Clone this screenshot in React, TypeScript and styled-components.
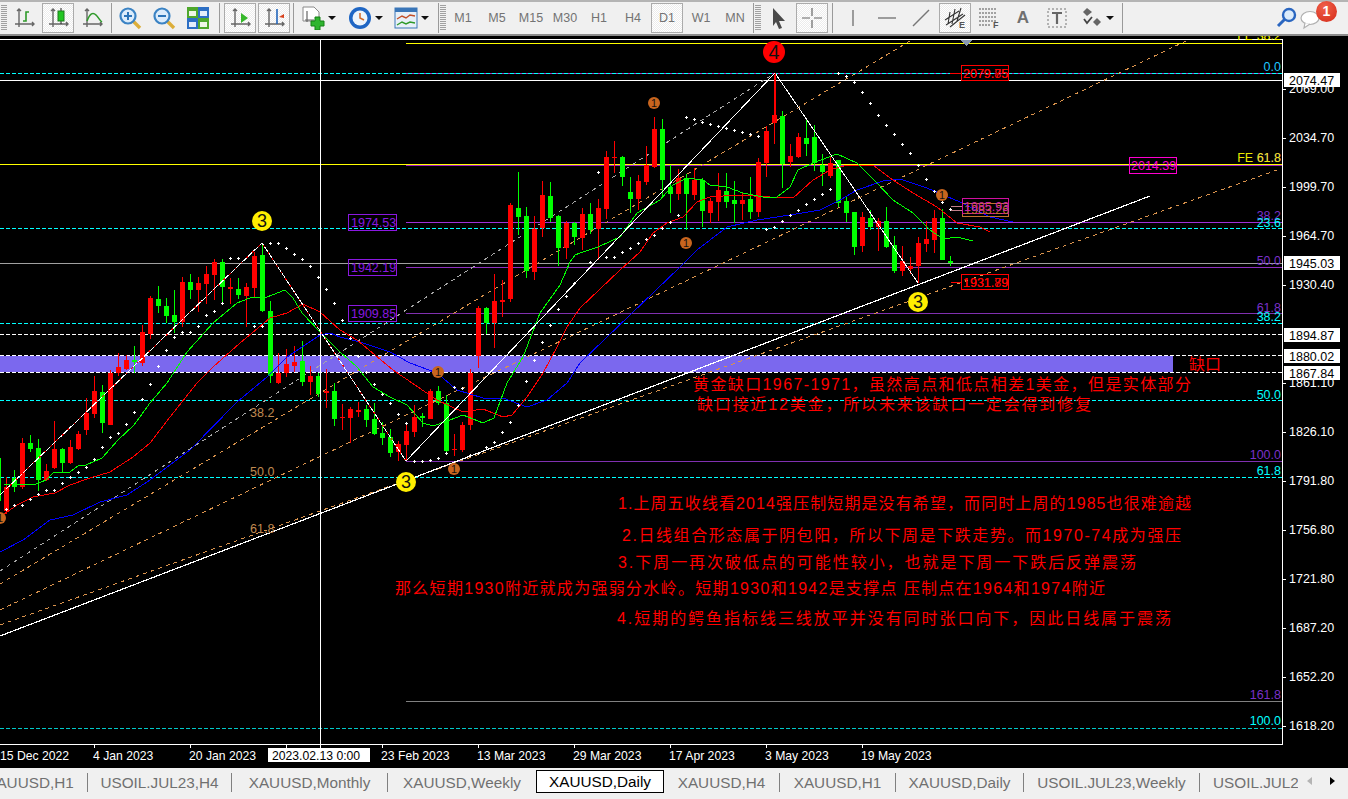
import React from 'react';
import styled, { createGlobalStyle } from 'styled-components';

const Global = createGlobalStyle`
  html, body {
    margin: 0;
    padding: 0;
    background: #f0f0f0;
    overflow: hidden;
  }
`;

const sans = `"Liberation Sans", "Noto Sans CJK SC", sans-serif`;

const Page = styled.div`
  width: 1348px;
  height: 799px;
  display: flex;
  flex-direction: column;
  font-family: ${sans};
`;

const Toolbar = styled.div`
  height: 36px;
  box-sizing: border-box;
  display: flex;
  align-items: center;
  background: #f0f0f0;
  border-top: 2px solid #b4b4b4;
  border-bottom: 2px solid #8c8c8c;
  padding-left: 1px;
`;

const Grip = styled.div`
  width: 6px;
  height: 26px;
  flex: none;
  background: repeating-linear-gradient(to bottom, #a0a0a0 0 1px, #f0f0f0 1px 2px);
`;

const Sep = styled.div<{ $w?: number }>`
  width: ${(p) => p.$w ?? 4}px;
  height: 30px;
  flex: none;
  display: flex;
  justify-content: center;

  &::before {
    content: '';
    width: 1px;
    background: #9a9a9a;
  }
`;

const ToolButton = styled.div<{ $w?: number; $active?: boolean }>`
  flex: none;
  box-sizing: border-box;
  width: ${(p) => (p.$w ?? 34) - (p.$active ? 2 : 0)}px;
  margin: 0 ${(p) => (p.$active ? 1 : 0)}px;
  height: 30px;
  display: flex;
  align-items: center;
  justify-content: center;
  border: 1px solid ${(p) => (p.$active ? '#ababab' : 'transparent')};
  background: ${(p) =>
    p.$active ? 'repeating-conic-gradient(#ffffff 0 25%, #ececec 0 50%) 0 0 / 2px 2px' : 'none'};
  color: #737373;
  font-size: 12.5px;
`;

const DropButton = styled.div<{ $w: number; $pad: number }>`
  flex: none;
  width: ${(p) => p.$w}px;
  height: 30px;
  box-sizing: border-box;
  padding-left: ${(p) => p.$pad}px;
  display: flex;
  align-items: center;
  gap: 3px;
`;

const Caret = styled.span`
  width: 0;
  height: 0;
  border-left: 4px solid transparent;
  border-right: 4px solid transparent;
  border-top: 4px solid #111;
`;

const Spacer = styled.div`
  flex: 1;
`;

const Notify = styled.div`
  width: 40px;
  height: 30px;
  flex: none;
  position: relative;
  margin-right: 9px;
  display: flex;
  align-items: center;
`;

const Badge = styled.span`
  position: absolute;
  right: 2px;
  top: -2px;
  width: 21px;
  height: 21px;
  border-radius: 50%;
  background: radial-gradient(circle at 40% 30%, #f0604a, #d42a18);
  color: #fff;
  font-size: 14px;
  font-weight: bold;
  text-align: center;
  line-height: 21px;
`;

const ChartSvg = styled.svg`
  display: block;
  flex: none;
  background: #000;
  shape-rendering: crispEdges;
`;

const ChartText = styled.text`
  font-family: ${sans};
  font-size: 12.5px;
`;

const MarkerText = styled.text<{ $size: number }>`
  font-family: ${sans};
  font-size: ${(p) => p.$size}px;
  fill: #111;
  text-anchor: middle;
`;

const DateText = styled.text<{ $dark?: boolean }>`
  font-family: ${sans};
  font-size: 12.2px;
  fill: ${(p) => (p.$dark ? '#000' : '#fff')};
`;

const Note = styled.text`
  font-family: ${sans};
  font-size: 16px;
  fill: #ff0000;
`;

const TabBar = styled.div`
  flex: 1;
  display: flex;
  background: #f0f0f0;
  overflow: hidden;
`;

const TabList = styled.div`
  width: 1298px;
  flex: none;
  display: flex;
  align-items: flex-start;
  overflow: hidden;
  padding-top: 2px;
`;

const Tab = styled.div<{ $w: number; $active?: boolean; $sep?: boolean; $cut?: boolean }>`
  flex: none;
  box-sizing: border-box;
  width: ${(p) => p.$w}px;
  height: ${(p) => (p.$active ? 23 : 19)}px;
  margin-top: ${(p) => (p.$active ? 0 : 3)}px;
  padding-left: ${(p) => (p.$cut ? 13 : 0)}px;
  line-height: ${(p) => (p.$active ? 22 : 19)}px;
  text-align: ${(p) => (p.$cut ? 'left' : 'center')};
  font-size: 15.3px;
  white-space: nowrap;
  color: ${(p) => (p.$active ? '#000' : '#707070')};
  background: ${(p) => (p.$active ? '#fff' : 'transparent')};
  border: ${(p) => (p.$active ? '1px solid #000' : 'none')};
  border-right: ${(p) => (p.$sep ? '1px solid #808080' : p.$active ? '1px solid #000' : 'none')};

  &:first-child {
    margin-left: -27px;
  }
`;

const TabArrows = styled.div`
  display: flex;
  gap: 18px;
  padding: 9px 0 0 9px;
`;

const TabArrowLeft = styled.span`
  width: 0;
  height: 0;
  border-top: 4px solid transparent;
  border-bottom: 4px solid transparent;
  border-right: 5px solid #b4b4b4;
`;

const TabArrowRight = styled.span`
  width: 0;
  height: 0;
  border-top: 4px solid transparent;
  border-bottom: 4px solid transparent;
  border-left: 5px solid #000;
`;

const Ico = styled.svg.attrs({ width: 24, height: 24, viewBox: '0 0 24 24' })`
  display: block;
  flex: none;
`;

const Axes = () => (
  <path
    d="M7 3v18M3 18h19M5 5l2-2 2 2M20 16l2 2-2 2"
    fill="none"
    stroke="#666"
    strokeWidth="1.4"
  />
);

const BarsIcon = () => (
  <Ico>
    <Axes />
    <path d="M11 15h3V6h3" fill="none" stroke="#2f9a2a" strokeWidth="1.6" />
  </Ico>
);
const CandleIcon = () => (
  <Ico>
    <Axes />
    <path d="M15 2v16" stroke="#222" strokeWidth="1" />
    <rect x="12" y="5" width="6" height="10" fill="#22c622" stroke="#1c7a1c" />
  </Ico>
);
const LineIcon = () => (
  <Ico>
    <Axes />
    <path d="M7 15C10 7 13 6 16 9s4 6 6 7" fill="none" stroke="#2f9a2a" strokeWidth="1.6" />
  </Ico>
);
const Lens = ({ plus }: { plus?: boolean }) => (
  <Ico>
    <path d="M15 15l7 7" stroke="#dcae3a" strokeWidth="3.4" />
    <circle cx="10" cy="10" r="7.5" fill="#dcecfb" stroke="#3b83c4" strokeWidth="2.2" />
    <path d="M6 10h8" stroke="#2c74b8" strokeWidth="2" />
    {plus && <path d="M10 6v8" stroke="#2c74b8" strokeWidth="2" />}
  </Ico>
);
const TileIcon = () => (
  <Ico>
    <rect x="1" y="1" width="11" height="11" fill="#4fa82c" />
    <rect x="12" y="1" width="11" height="11" fill="#2d6fc4" />
    <rect x="1" y="12" width="11" height="11" fill="#2d6fc4" />
    <rect x="12" y="12" width="11" height="11" fill="#4fa82c" />
    <rect x="3" y="5" width="7" height="5" fill="#eef6e6" />
    <rect x="14" y="5" width="7" height="5" fill="#e4eefa" />
    <rect x="3" y="16" width="7" height="5" fill="#e4eefa" />
    <rect x="14" y="16" width="7" height="5" fill="#eef6e6" />
  </Ico>
);
const ScrollIcon = () => (
  <Ico>
    <Axes />
    <path d="M13 7l7 5-7 5z" fill="#36b82a" />
  </Ico>
);
const ShiftIcon = () => (
  <Ico>
    <Axes />
    <path d="M15 3v15" stroke="#2266bb" strokeWidth="1.6" />
    <path d="M17 11l5-3v2h0v2l-5-1z" fill="#d8401c" />
  </Ico>
);
const NewChartIcon = () => (
  <Ico>
    <path d="M2 1h11l5 5v9H2z" fill="#fff" stroke="#8a8a8a" />
    <path d="M6 5v11M4 14h9" stroke="#666" strokeWidth="1.2" fill="none" />
    <path d="M14 11h5v4h4v5h-4v4h-5v-4h-4v-5h4z" fill="#2fb52f" stroke="#168016" />
  </Ico>
);
const ClockIcon = () => (
  <Ico>
    <circle cx="12" cy="12" r="11" fill="#1f66c4" />
    <circle cx="12" cy="12" r="7.5" fill="#eef5fb" />
    <path d="M12 7v5l4 2" fill="none" stroke="#d06a2a" strokeWidth="1.5" />
  </Ico>
);
const IndicatorIcon = () => (
  <Ico>
    <rect x="1" y="2" width="22" height="20" fill="#e8f0f8" stroke="#3a76b8" />
    <rect x="1" y="2" width="22" height="4" fill="#3a76b8" />
    <path d="M3 13l5-3 4 2 4-3 5 1" fill="none" stroke="#c2502a" strokeWidth="1.4" />
    <path d="M3 19l5-3 4 2 4-2 5 1" fill="none" stroke="#2f9a2a" strokeWidth="1.4" />
  </Ico>
);
const CursorIcon = () => (
  <Ico>
    <path d="M7 2l12 13h-6l3 7-3 1-3-7-3 4z" fill="#4a4a4a" />
  </Ico>
);
const CrossIcon = () => (
  <Ico>
    <path d="M12 2v8M12 14v8M2 12h8M14 12h8" stroke="#666" strokeWidth="1.2" />
  </Ico>
);
const VLineIcon = () => (
  <Ico>
    <path d="M12 4v16" stroke="#777" strokeWidth="1.4" />
  </Ico>
);
const HLineIcon = () => (
  <Ico>
    <path d="M3 12h18" stroke="#777" strokeWidth="1.4" />
  </Ico>
);
const DiagIcon = () => (
  <Ico>
    <path d="M4 20L20 4" stroke="#777" strokeWidth="1.4" />
  </Ico>
);
const SmallLetter = styled.text`
  font-family: ${sans};
  font-weight: bold;
  font-size: 9px;
  fill: #555;
`;
const ChannelIcon = () => (
  <Ico>
    <path
      d="M2 14L16 5M3 19L20 8M7 21L22 9M7 6l-2 12M12 3l-3 15M18 2l-4 13"
      fill="none"
      stroke="#333"
      strokeWidth="1.1"
    />
    <SmallLetter x="16" y="22">
      E
    </SmallLetter>
  </Ico>
);
const FiboIcon = () => (
  <Ico>
    <path
      d="M2 3h18M2 7h18M2 11h18M2 15h18M2 19h12"
      fill="none"
      stroke="#888"
      strokeDasharray="2 1"
      strokeWidth="1.3"
    />
    <SmallLetter x="16" y="22">
      F
    </SmallLetter>
  </Ico>
);
const LabelA = styled.span`
  font-size: 17px;
  font-weight: bold;
  color: #707070;
`;
const TextIcon = () => (
  <Ico>
    <rect x="3" y="3" width="18" height="18" fill="none" stroke="#777" strokeDasharray="2 2" />
    <path d="M7 7h10M12 7v11" stroke="#666" strokeWidth="2.2" />
  </Ico>
);
const ObjectsIcon = () => (
  <Ico>
    <path d="M8 2l5 4-5 4-4-4zM18 12l4 4-4 4-4-4z" fill="#666" />
    <path d="M5 13l3 4 5-6" fill="none" stroke="#444" strokeWidth="1.8" />
  </Ico>
);
const SearchIcon = () => (
  <Ico>
    <circle cx="14" cy="9" r="6" fill="#dcecfb" stroke="#2a66c0" strokeWidth="2.4" />
    <path d="M10 13l-7 7" stroke="#2a66c0" strokeWidth="3" />
  </Ico>
);
const ChatIcon = () => (
  <Ico>
    <ellipse cx="11" cy="12" rx="9" ry="6.5" fill="#fff" stroke="#b0b0b0" strokeWidth="1.2" />
    <path d="M6 17l-1 5 6-4" fill="#fff" stroke="#b0b0b0" strokeWidth="1.2" />
  </Ico>
);

type Candle = ['r' | 'g', number, number, number, number];

// page coordinates read off the chart, one entry every 8px starting at x = -2
const candles: Candle[] = [
  ['g', 458, 458, 501, 501], ['r', 477, 487, 511, 514], ['g', 470, 478, 487, 492],
  ['r', 438, 443, 487, 489], ['g', 435, 443, 449, 452], ['g', 439, 448, 480, 491],
  ['r', 464, 471, 480, 481], ['r', 421, 449, 468, 469], ['g', 448, 449, 463, 473],
  ['r', 440, 447, 463, 464], ['r', 431, 434, 449, 450], ['r', 398, 413, 430, 435],
  ['r', 376, 391, 414, 418], ['g', 385, 392, 423, 433], ['r', 370, 373, 425, 425],
  ['r', 353, 367, 373, 376], ['r', 355, 360, 369, 370], ['g', 346, 360, 362, 373],
  ['r', 325, 332, 363, 366], ['r', 296, 298, 334, 339], ['g', 286, 299, 306, 313],
  ['g', 298, 306, 316, 323], ['g', 290, 315, 322, 333], ['r', 277, 282, 322, 327],
  ['g', 274, 282, 290, 299], ['r', 277, 283, 290, 312], ['r', 266, 274, 284, 304],
  ['r', 259, 262, 275, 300], ['g', 259, 262, 287, 303], ['r', 278, 287, 289, 304],
  ['g', 278, 289, 295, 299], ['r', 283, 287, 296, 327], ['r', 252, 256, 288, 298],
  ['g', 243, 255, 311, 312], ['g', 301, 311, 376, 383], ['r', 353, 373, 383, 384],
  ['r', 349, 364, 373, 377], ['r', 346, 362, 366, 372], ['g', 341, 361, 382, 386],
  ['r', 366, 376, 382, 395], ['g', 373, 376, 394, 397], ['r', 369, 391, 393, 408],
  ['g', 383, 391, 419, 426], ['r', 404, 417, 418, 430], ['r', 407, 409, 418, 443],
  ['r', 402, 410, 412, 417], ['g', 405, 409, 420, 427], ['g', 403, 419, 434, 435],
  ['g', 422, 433, 438, 445], ['g', 429, 437, 453, 457], ['r', 441, 444, 452, 461],
  ['r', 425, 431, 445, 461], ['r', 405, 417, 432, 437], ['g', 413, 416, 418, 427],
  ['r', 389, 391, 419, 419], ['g', 386, 391, 403, 405], ['g', 395, 403, 451, 452],
  ['r', 434, 449, 450, 456], ['r', 422, 425, 450, 452], ['r', 369, 373, 425, 430],
  ['r', 306, 308, 356, 368], ['g', 307, 308, 323, 334], ['r', 274, 301, 323, 348],
  ['r', 280, 300, 302, 317], ['r', 203, 205, 299, 302], ['g', 172, 208, 217, 235],
  ['g', 207, 216, 271, 278], ['r', 216, 229, 272, 280], ['r', 181, 195, 228, 237],
  ['g', 182, 196, 218, 222], ['g', 215, 216, 248, 266], ['r', 221, 223, 248, 259],
  ['g', 222, 223, 237, 245], ['r', 208, 214, 238, 250], ['g', 203, 214, 230, 234],
  ['r', 199, 208, 229, 260], ['r', 151, 157, 209, 219], ['r', 141, 157, 158, 173],
  ['g', 156, 157, 177, 186], ['g', 177, 192, 199, 213], ['r', 175, 181, 199, 210],
  ['r', 146, 165, 182, 185], ['r', 117, 129, 167, 168], ['g', 119, 129, 180, 198],
  ['g', 165, 187, 194, 213], ['r', 169, 178, 194, 200], ['g', 174, 178, 194, 230],
  ['r', 168, 180, 195, 200], ['g', 178, 180, 211, 227], ['r', 198, 201, 213, 223],
  ['r', 173, 190, 202, 221], ['g', 173, 191, 202, 208], ['g', 181, 200, 204, 223],
  ['r', 193, 200, 204, 220], ['g', 177, 199, 212, 219], ['r', 158, 162, 212, 217],
  ['r', 126, 131, 163, 177], ['r', 75, 115, 123, 144], ['g', 111, 116, 164, 188],
  ['r', 144, 156, 162, 167], ['r', 133, 137, 157, 158], ['g', 118, 138, 144, 156],
  ['g', 125, 137, 163, 171], ['g', 154, 165, 172, 186], ['r', 157, 163, 176, 178],
  ['g', 160, 160, 203, 207], ['g', 196, 201, 213, 222], ['g', 212, 212, 247, 255],
  ['r', 212, 217, 246, 252], ['g', 210, 218, 227, 230], ['r', 218, 221, 227, 251],
  ['g', 207, 221, 247, 248], ['g', 236, 245, 271, 273], ['r', 246, 261, 271, 276],
  ['r', 257, 266, 269, 274], ['r', 237, 243, 266, 283], ['r', 221, 239, 244, 252],
  ['r', 210, 218, 240, 253], ['g', 209, 218, 260, 260], ['g', 256, 261, 263, 266],
];

const greenLine =
  '4,484 36,484 46,480 54,472 70,472 78,466 86,465 102,458 118,440 134,425 150,403 167,383 187,352 213,323 237,303 250,298 267,297 285,290 293,298 302,313 320,332 340,352 357,367 373,387 390,397 407,405 423,423 433,426 450,420 463,415 483,423 494,418 507,383 523,357 540,313 560,285 570,262 575,255 580,253 598,247 620,237 637,213 660,200 673,185 687,178 703,180 710,185 727,187 743,193 763,197 777,197 790,187 798,170 813,163 837,154 857,163 877,183 893,200 913,213 930,230 943,239 957,237 973,241';
const redLine =
  '0,517 17,505 33,497 55,493 70,485 90,478 110,472 133,457 150,443 170,417 197,383 213,367 240,343 270,318 287,313 303,304 320,312 340,330 357,340 393,370 437,400 463,412 483,409 503,417 512,415 527,397 543,373 557,347 567,327 580,308 620,270 640,252 653,233 667,223 683,217 697,202 710,197 737,195 770,197 793,198 813,180 830,170 847,165 873,165 893,180 913,193 937,207 957,223 980,227 990,232';
const blueLine =
  '0,552 23,540 50,520 73,515 100,502 127,495 150,480 190,450 237,402 267,377 287,357 320,335 330,333 340,337 360,342 390,352 410,363 437,373 457,390 483,398 503,398 527,407 547,400 567,383 580,363 680,267 697,250 727,227 757,220 790,215 820,210 840,200 857,190 883,181 900,179 927,188 960,202 990,217 1013,222';

const sarDots = [
  [6, 509], [14, 505], [22, 505], [30, 499], [38, 494], [46, 490], [54, 490], [62, 483], [70, 477],
  [78, 472], [86, 467], [94, 459], [102, 447], [110, 437], [118, 433], [126, 424], [134, 412],
  [142, 399], [150, 384], [158, 366], [166, 350], [174, 337], [182, 332], [190, 332], [198, 326],
  [206, 315], [214, 311], [222, 303], [230, 258], [238, 258], [254, 326], [262, 326], [270, 243],
  [278, 243], [286, 248], [294, 254], [302, 259], [310, 266], [318, 277], [326, 289], [334, 303],
  [342, 320], [350, 338], [358, 356], [366, 372], [374, 384], [382, 394], [390, 403], [398, 414],
  [406, 423], [414, 461], [422, 461], [430, 460], [438, 458], [446, 453], [454, 387], [462, 388],
  [470, 455], [478, 453], [486, 447], [494, 442], [502, 432], [510, 422], [518, 405], [526, 381],
  [534, 360], [542, 342], [550, 325], [558, 309], [566, 296], [574, 283], [590, 262], [598, 172],
  [606, 257], [614, 257], [622, 252], [630, 248], [638, 243], [646, 239], [654, 235], [662, 228],
  [670, 222], [678, 215], [686, 117], [694, 119], [702, 122], [710, 124], [718, 126], [726, 128],
  [734, 130], [742, 132], [750, 134], [758, 136], [766, 229], [774, 227], [782, 221], [790, 215],
  [798, 210], [806, 204], [814, 199], [822, 194], [830, 189], [838, 73], [846, 76], [854, 82],
  [862, 92], [870, 103], [878, 115], [886, 125], [894, 134], [902, 144], [910, 153], [918, 165],
  [926, 179], [934, 191], [942, 202], [950, 209],
];

type Level = { y: number; from?: number; color: string; dash?: string };

const levels: Level[] = [
  { y: 39, color: '#ffffff' },
  { y: 43, from: 406, color: '#ffff00' },
  { y: 73, color: '#00ffff', dash: '4 2' },
  { y: 73, from: 406, color: '#b030c0', dash: '2 4' },
  { y: 80, color: '#ffffff' },
  { y: 165, from: 406, color: '#a020c0' },
  { y: 164, color: '#ffff00' },
  { y: 222, from: 406, color: '#a030d8' },
  { y: 228, color: '#00ffff', dash: '4 2' },
  { y: 263, color: '#a0a0a0' },
  { y: 267, from: 406, color: '#9030c0' },
  { y: 313, from: 406, color: '#8030b0' },
  { y: 323, color: '#00ffff', dash: '4 2' },
  { y: 334, color: '#ffffff', dash: '4 2' },
  { y: 355, color: '#ffffff', dash: '4 2' },
  { y: 372, color: '#ffffff', dash: '4 2' },
  { y: 400, color: '#00ffff', dash: '4 2' },
  { y: 461, from: 406, color: '#8030b0' },
  { y: 477, color: '#00ffff', dash: '4 2' },
  { y: 701, from: 406, color: '#808080' },
  { y: 728, color: '#00c8c8', dash: '4 2' },
];

const levelLabels: [number, string, string][] = [
  [71, '0.0', '#1fc8ff'],
  [220, '38.2', '#7a30c8'],
  [227, '23.6', '#00ffff'],
  [265, '50.0', '#7a30c8'],
  [312, '61.8', '#7a30c8'],
  [321, '38.2', '#00ffff'],
  [399, '50.0', '#00ffff'],
  [459, '100.0', '#7a30c8'],
  [475, '61.8', '#00ffff'],
  [699, '161.8', '#7a30c8'],
  [725, '100.0', '#00ffff'],
];

const priceTicks: [number, string][] = [
  [89, '2069.00'], [138, '2034.70'], [187, '1999.70'], [236, '1964.70'], [285, '1930.40'],
  [383, '1861.10'], [432, '1826.10'], [481, '1791.80'], [530, '1756.80'], [579, '1721.80'],
  [628, '1687.20'], [677, '1652.20'], [726, '1618.20'],
];

const priceTags: [number, string][] = [
  [80, '2074.47'], [263, '1945.03'], [335, '1894.87'], [356, '1880.02'], [373, '1867.84'],
];

const dateTicks = [94, 190, 286, 382, 478, 574, 670, 766, 862];
const dateLabels: [number, string][] = [
  [0, '15 Dec 2022'], [93, '4 Jan 2023'], [189, '20 Jan 2023'], [381, '23 Feb 2023'],
  [477, '13 Mar 2023'], [573, '29 Mar 2023'], [669, '17 Apr 2023'], [765, '3 May 2023'],
  [861, '19 May 2023'],
];

const notes: [number, number, number, string][] = [
  [693, 390, 498, '黄金缺口1967-1971，虽然高点和低点相差1美金，但是实体部分'],
  [697, 410, 394, '缺口接近12美金，所以未来该缺口一定会得到修复'],
  [618, 509, 573, '1.上周五收线看2014强压制短期是没有希望，而同时上周的1985也很难逾越'],
  [622, 541, 559, '2.日线组合形态属于阴包阳，所以下周是下跌走势。而1970-74成为强压'],
  [618, 568, 518, '3.下周一再次破低点的可能性较小，也就是下周一下跌后反弹震荡'],
  [395, 594, 710, '那么短期1930附近就成为强弱分水岭。短期1930和1942是支撑点 压制点在1964和1974附近'],
  [617, 624, 554, '4.短期的鳄鱼指标线三线放平并没有同时张口向下，因此日线属于震荡'],
];

const boxes: [number, number, string, string][] = [
  [348, 214, '1974.53', '#8a18e0'],
  [348, 259, '1942.19', '#8a18e0'],
  [348, 305, '1909.85', '#8a18e0'],
];

const Marker = ({ x, y, r, fill, n }: { x: number; y: number; r: number; fill: string; n: number }) => (
  <g shapeRendering="auto">
    <circle cx={x} cy={y} r={r} fill={fill} />
    <MarkerText x={x} y={y + r * 0.62} $size={r * 1.8}>
      {n}
    </MarkerText>
  </g>
);

const Chart = () => (
  <ChartSvg width={1348} height={732} viewBox="0 36 1348 732">
    <rect x={0} y={356} width={1173} height={16} fill="#7b68ee" />

    {levels.map((l, i) => (
      <path
        key={i}
        d={`M${l.from ?? 0} ${l.y + 0.5}H1282`}
        stroke={l.color}
        strokeDasharray={l.dash}
        fill="none"
      />
    ))}

    <path d="M0 571L775 73" stroke="#a8a8a8" strokeDasharray="4 4" fill="none" />
    <path d="M0 584L910 41" stroke="#d8924c" strokeDasharray="4 4" fill="none" />
    <path d="M0 610L1190 39" stroke="#d8924c" strokeDasharray="4 4" fill="none" />
    <path d="M0 625L1280 169" stroke="#d8924c" strokeDasharray="4 4" fill="none" />

    {candles.map(([c, hi, top, bot, lo], i) => {
      const x = -2 + i * 8;
      const color = c === 'r' ? '#ff0000' : '#00ff00';
      return (
        <g key={i} fill={color}>
          <rect x={x} y={hi} width={1} height={lo - hi} />
          <rect x={x - 2} y={top} width={5} height={Math.max(bot - top, 1)} />
        </g>
      );
    })}

    <polyline points={blueLine} fill="none" stroke="#0000ff" />
    <polyline points={redLine} fill="none" stroke="#ff0000" />
    <polyline points={greenLine} fill="none" stroke="#00ff00" />

    <path d={sarDots.map(([x, y]) => `M${x - 1} ${y}h3v1h-3zM${x} ${y - 1}h1v3h-1z`).join('')} fill="#fff" />

    <path d="M0 495L262 243L406 461" fill="none" stroke="#ff0000" />
    <path d="M0 495L262 243L406 461" fill="none" stroke="#ffffff" strokeDasharray="6 2" />
    <path d="M406 461L775 73L918 283" fill="none" stroke="#ffffff" />
    <path d="M775 73V116" stroke="#ff0000" />
    <path d="M0 636L1150 196" stroke="#ffffff" strokeWidth="1.2" fill="none" />

    {levelLabels.map(([y, t, c]) => (
      <ChartText key={`${y}${t}`} x={1281} y={y} fill={c} textAnchor="end">
        {t}
      </ChartText>
    ))}
    <ChartText x={1281} y={40} fill="#ffff00" textAnchor="end">
      FE 38.2
    </ChartText>
    <ChartText x={1281} y={162} fill="#8a30d0" textAnchor="end">
      61.8
    </ChartText>
    <ChartText x={1281} y={162} fill="#e8e800" textAnchor="end">
      FE 61.8
    </ChartText>

    <ChartText x={250} y={417} fill="#c08a50">38.2</ChartText>
    <ChartText x={250} y={476} fill="#c08a50">50.0</ChartText>
    <ChartText x={250} y={533} fill="#c08a50">61.8</ChartText>

    {boxes.map(([x, y, t, c]) => (
      <g key={t}>
        <rect x={x + 0.5} y={y + 0.5} width={48} height={16} fill="none" stroke={c} />
        <ChartText x={x + 3} y={y + 13} fill={c}>{t}</ChartText>
      </g>
    ))}

    <rect x={1129.5} y={157.5} width={47} height={16} fill="none" stroke="#ff00d0" />
    <ChartText x={1131} y={170} fill="#ff00d0">2014.39</ChartText>

    <path d="M950 73.5H961" stroke="#ff0000" />
    <rect x={961.5} y={65.5} width={47} height={15} fill="none" stroke="#ff0000" />
    <ChartText x={963} y={78} fill="#ff0000">2079.85</ChartText>
    <ChartText x={963} y={78} fill="#ff0000">2079.75</ChartText>

    <path d="M951 206.5H962M951 210.5H962" stroke="#c0808a" />
    <rect x={962.5} y={203.5} width={46} height={13} fill="none" stroke="#c07030" />
    <rect x={962.5} y={198.5} width={46} height={15} fill="none" stroke="#d010a0" />
    <ChartText x={964} y={214} fill="#c07030">1983.26</ChartText>
    <ChartText x={964} y={211} fill="#c81ea8">1985.93</ChartText>

    <path d="M951 282.5H961" stroke="#ff0000" />
    <rect x={961.5} y={274.5} width={47} height={15} fill="none" stroke="#ff0000" />
    <ChartText x={963} y={287} fill="#ff0000">1931.89</ChartText>
    <ChartText x={963} y={287} fill="#ff0000">1931.79</ChartText>

    <Note x={1189} y={370}>缺口</Note>

    {notes.map(([x, y, w, t]) => (
      <Note key={t} x={x} y={y} textLength={w} lengthAdjust="spacing">
        {t}
      </Note>
    ))}

    <Marker x={262} y={221} r={10} fill="#ffee00" n={3} />
    <Marker x={918} y={302} r={10} fill="#ffee00" n={3} />
    <Marker x={406} y={482} r={10} fill="#ffee00" n={3} />
    <Marker x={774} y={52} r={11} fill="#ff0000" n={4} />
    <Marker x={654} y={103} r={6} fill="#c8651e" n={1} />
    <Marker x={686} y={243} r={6} fill="#c8651e" n={1} />
    <Marker x={454} y={469} r={6} fill="#c8651e" n={1} />
    <Marker x={438} y={372} r={6} fill="#c8651e" n={1} />
    <Marker x={942} y={195} r={6} fill="#c8651e" n={1} />
    <Marker x={0} y={518} r={6} fill="#c8651e" n={1} />

    <path d="M961 40h11l-5.5 6z" fill="#8a9ab0" />

    <rect x={0} y={744} width={1282} height={1} fill="#fff" />
    <rect x={1282} y={39} width={1} height={706} fill="#fff" />
    <rect x={320} y={39} width={1} height={709} fill="#fff" />
    {dateTicks.map((x) => (
      <rect key={x} x={x} y={745} width={1} height={3} fill="#fff" />
    ))}
    {dateLabels.map(([x, t]) => (
      <DateText key={t} x={x} y={760}>
        {t}
      </DateText>
    ))}
    <rect x={268} y={748} width={102} height={14} fill="#fff" />
    <DateText x={272} y={760} $dark>
      2023.02.13 0:00
    </DateText>

    {priceTicks.map(([y, t]) => (
      <g key={t}>
        <rect x={1283} y={y} width={3} height={1} fill="#fff" />
        <ChartText x={1289} y={y + 4} fill="#fff">{t}</ChartText>
      </g>
    ))}
    {priceTags.map(([y, t]) => (
      <g key={t}>
        <rect x={1284} y={y - 7} width={56} height={14} fill="#fff" />
        <ChartText x={1289} y={y + 5} fill="#000">{t}</ChartText>
      </g>
    ))}
  </ChartSvg>
);

const periods = ['M1', 'M5', 'M15', 'M30', 'H1', 'H4', 'D1', 'W1', 'MN'];

const tabs: { label: string; w: number; sep?: boolean; active?: boolean; cut?: boolean }[] = [
  { label: 'XAUUSD,H1', w: 115, sep: true },
  { label: 'USOIL.JUL23,H4', w: 144, sep: true },
  { label: 'XAUUSD,Monthly', w: 156, sep: true },
  { label: 'XAUUSD,Weekly', w: 148 },
  { label: 'XAUUSD,Daily', w: 128, active: true },
  { label: 'XAUUSD,H4', w: 116, sep: true },
  { label: 'XAUUSD,H1', w: 116, sep: true },
  { label: 'XAUUSD,Daily', w: 128, sep: true },
  { label: 'USOIL.JUL23,Weekly', w: 176, sep: true },
  { label: 'USOIL.JUL23,Daily', w: 180, cut: true },
];

export default function App() {
  return (
    <Page>
      <Global />
      <Toolbar>
        <Grip />
        <ToolButton><BarsIcon /></ToolButton>
        <ToolButton $active><CandleIcon /></ToolButton>
        <ToolButton><LineIcon /></ToolButton>
        <Sep />
        <ToolButton><Lens plus /></ToolButton>
        <ToolButton><Lens /></ToolButton>
        <ToolButton><TileIcon /></ToolButton>
        <Sep $w={8} />
        <ToolButton $active><ScrollIcon /></ToolButton>
        <ToolButton $active><ShiftIcon /></ToolButton>
        <Sep />
        <DropButton $w={50} $pad={6}><NewChartIcon /><Caret /></DropButton>
        <DropButton $w={47} $pad={3}><ClockIcon /><Caret /></DropButton>
        <DropButton $w={44} $pad={2}><IndicatorIcon /><Caret /></DropButton>
        <Sep />
        <Grip />
        {periods.map((p) => (
          <ToolButton key={p} $active={p === 'D1'}>{p}</ToolButton>
        ))}
        <Sep $w={3} />
        <Grip />
        <ToolButton><CursorIcon /></ToolButton>
        <ToolButton $active><CrossIcon /></ToolButton>
        <Sep $w={7} />
        <ToolButton><VLineIcon /></ToolButton>
        <ToolButton><HLineIcon /></ToolButton>
        <ToolButton><DiagIcon /></ToolButton>
        <ToolButton $active><ChannelIcon /></ToolButton>
        <ToolButton><FiboIcon /></ToolButton>
        <ToolButton><LabelA>A</LabelA></ToolButton>
        <ToolButton><TextIcon /></ToolButton>
        <DropButton $w={46} $pad={5}><ObjectsIcon /><Caret /></DropButton>
        <Sep />
        <Spacer />
        <SearchIcon />
        <Notify>
          <ChatIcon />
          <Badge>1</Badge>
        </Notify>
      </Toolbar>
      <Chart />
      <TabBar>
        <TabList>
          {tabs.map((t, i) => (
            <Tab key={i} $w={t.w} $sep={t.sep} $active={t.active} $cut={t.cut}>
              {t.label}
            </Tab>
          ))}
        </TabList>
        <TabArrows>
          <TabArrowLeft />
          <TabArrowRight />
        </TabArrows>
      </TabBar>
    </Page>
  );
}
